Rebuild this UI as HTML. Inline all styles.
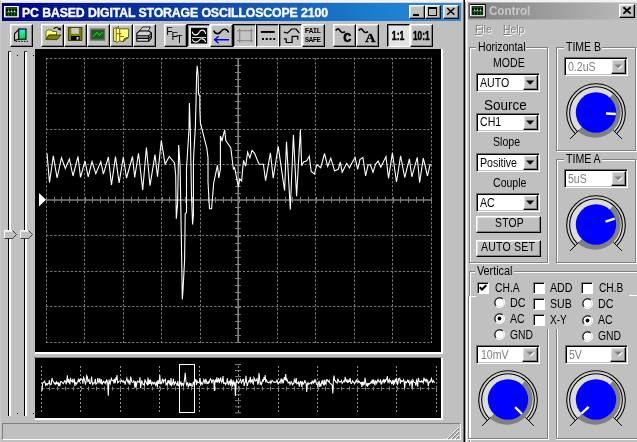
<!DOCTYPE html><html><head><meta charset="utf-8"><title>PC BASED DIGITAL STORAGE OSCILLOSCOPE 2100</title><style>
*{box-sizing:border-box;margin:0;padding:0}
html,body{width:637px;height:442px;overflow:hidden;background:#c0c0c0}
body{position:relative;will-change:transform;font-family:"Liberation Sans",sans-serif;font-size:11px;color:#000}
.a{position:absolute}
.t{position:absolute;white-space:nowrap;line-height:1}
.btn{position:absolute;background:#c0c0c0;border:1px solid;border-color:#fff #000 #000 #fff;box-shadow:inset -1px -1px 0 #808080, inset 1px 1px 0 #dfdfdf}
.btnp{position:absolute;background:#e0e0e0;border:1px solid;border-color:#000 #fff #fff #000;box-shadow:inset 1px 1px 0 #808080}
.sunk{position:absolute;border:1px solid;border-color:#808080 #fff #fff #808080;box-shadow:inset 1px 1px 0 #000}
.combo{position:absolute;background:#fff;border:1px solid;border-color:#686868 #fff #fff #686868;box-shadow:inset 1px 1px 0 #000, inset -1px -1px 0 #c0c0c0}
.grp{position:absolute;border:1px solid #808080;box-shadow:1px 1px 0 #fff, inset 1px 1px 0 #fff}
.lbl{position:absolute;background:#c0c0c0;white-space:nowrap;line-height:1;padding:0 1px}
.dis{color:#808080;text-shadow:1px 1px 0 #fff}
.chk{position:absolute;width:12px;height:12px;background:#fff;border:1px solid;border-color:#808080 #fff #fff #808080;box-shadow:inset 1px 1px 0 #000}
.rad{position:absolute;width:12px;height:12px;border-radius:50%;background:#fff;border:1px solid;border-color:#808080 #fff #fff #808080;box-shadow:inset 1px 1px 0 #404040}
</style></head><body>
<div class="a" style="left:0;top:0;width:463px;height:442px;background:#c0c0c0"></div>
<div class="a" style="left:0;top:0;width:463px;height:2px;background:#f2f2f2"></div>
<div class="a" style="left:0;top:2px;width:463px;height:1px;background:#d6d6da"></div>
<div class="a" style="left:0;top:0;width:1px;height:442px;background:#cacaca"></div>
<div class="a" style="left:463px;top:0;width:3px;height:442px;background:linear-gradient(90deg,#686868 0,#686868 1px,#000 1px,#000 2px,#a0a0a0 2px,#a0a0a0 3px)"></div>
<div class="a" style="left:2px;top:3px;width:459px;height:18px;background:linear-gradient(90deg,#000080 0%,#02108a 8%,#1a7ccc 80%,#2a8cd6 100%)"></div>
<svg class="a" style="left:3px;top:4px" width="18" height="16" viewBox="-1 -2 18 16"><rect x="0.5" y="0.5" width="15" height="12" fill="#101030"/><rect x="0" y="0" width="14.8" height="11.4" fill="#fff"/><rect x="1.6" y="1.2" width="11.6" height="9" fill="#000"/><line x1="4.6" y1="1.4" x2="4.6" y2="10" stroke="#148014" stroke-width="0.8"/><line x1="7.5" y1="1.4" x2="7.5" y2="10" stroke="#148014" stroke-width="0.8"/><line x1="10.6" y1="1.4" x2="10.6" y2="10" stroke="#148014" stroke-width="0.8"/><line x1="1.8" y1="2.5" x2="13" y2="2.5" stroke="#148014" stroke-width="0.6"/><line x1="1.8" y1="6.7" x2="13" y2="6.7" stroke="#148014" stroke-width="0.9"/><line x1="1.8" y1="9.1" x2="13" y2="9.1" stroke="#148014" stroke-width="0.6"/><circle cx="4.6" cy="5.2" r="0.75" fill="#e8ffe8"/><circle cx="7.5" cy="5.2" r="0.75" fill="#e8ffe8"/><circle cx="10.6" cy="5.2" r="0.75" fill="#e8ffe8"/><path d="M3.4 5.9 L4.6 5.2 L6 6 L7.5 5.3 L9 6 L10.6 5.2 L11.8 5.9" fill="none" stroke="#70c870" stroke-width="0.6"/></svg>
<div class="t" id="ttl" style="left:22px;top:6.5px;font-size:12.3px;font-weight:bold;color:#fff;letter-spacing:-0.12px;-webkit-text-stroke:0.35px #fff">PC BASED DIGITAL STORAGE OSCILLOSCOPE 2100</div>
<div class="btn" style="left:409px;top:5px;width:16px;height:14px"></div><div class="a" style="left:413px;top:14px;width:6px;height:2px;background:#000"></div>
<div class="btn" style="left:425px;top:5px;width:16px;height:14px"></div><div class="a" style="left:428px;top:7px;width:9px;height:9px;border:1px solid #000;border-top:2px solid #000"></div>
<div class="btn" style="left:443px;top:5px;width:16px;height:14px"></div><svg class="a" style="left:443px;top:5px" width="16" height="14"><path d="M4.2 3 L11.4 9.8 M11.4 3 L4.2 9.8" stroke="#000" stroke-width="1.55" fill="none"/></svg>
<div class="btn" style="left:10px;top:24px;width:23px;height:23px"></div>
<div class="btn" style="left:41px;top:24px;width:23px;height:23px"></div>
<div class="btn" style="left:64px;top:24px;width:23px;height:23px"></div>
<div class="btn" style="left:87px;top:24px;width:23px;height:23px"></div>
<div class="btn" style="left:110px;top:24px;width:23px;height:23px"></div>
<div class="btn" style="left:133px;top:24px;width:23px;height:23px"></div>
<div class="btn" style="left:164px;top:24px;width:23px;height:23px"></div>
<div class="btnp" style="left:187px;top:24px;width:23px;height:22.5px;background:#e4e4e4"></div>
<div class="btn" style="left:210px;top:24px;width:23px;height:23px"></div>
<div class="btnp" style="left:233px;top:24px;width:23px;height:22.5px;background:#c4c4c4"></div>
<div class="btnp" style="left:256px;top:24px;width:23px;height:22.5px;background:#c4c4c4"></div>
<div class="btnp" style="left:279px;top:24px;width:23px;height:22.5px;background:#c4c4c4"></div>
<div class="btn" style="left:302px;top:24px;width:23px;height:23px"></div>
<div class="btn" style="left:333px;top:24px;width:23px;height:23px"></div>
<div class="btn" style="left:356px;top:24px;width:23px;height:23px"></div>
<div class="btnp" style="left:387px;top:24px;width:23px;height:22.5px;background:#e4e4e4"></div>
<div class="btn" style="left:409.5px;top:24px;width:23px;height:23px"></div>
<svg class="a" style="left:0;top:22px" width="463" height="28" viewBox="0 22 463 28"><defs><linearGradient id="cg" x1="0" y1="0" x2="0.3" y2="1"><stop offset="0" stop-color="#30e0ff"/><stop offset="0.4" stop-color="#28e8c8"/><stop offset="1" stop-color="#10d830"/></linearGradient></defs><polygon points="18.8,29.3 14.5,33.8 14.5,40.6 18.8,39.2" fill="#c8c8c8" stroke="#000" stroke-width="1.1"/><rect x="18.8" y="29" width="7.2" height="10.2" fill="url(#cg)" stroke="#000" stroke-width="1.1"/><line x1="15.5" y1="41.3" x2="28" y2="41.3" stroke="#000" stroke-width="1" stroke-dasharray="1.6 1.2"/><polygon points="46,31.2 48,30 51.5,30 52.5,31.5 56.5,31.5 56.5,35 48.5,35 46,39.3" fill="#ffff80" stroke="#505000" stroke-width="0.8"/><polygon points="46.2,39.6 49,35 61,35 57.2,39.6" fill="#808000" stroke="#303000" stroke-width="0.8"/><path d="M53.6 29 Q56.6 25.3 59.4 29.4" fill="none" stroke="#000" stroke-width="1.1"/><polygon points="57.6,29.6 61,30.4 60.6,27.2" fill="#000"/><rect x="68.3" y="27.6" width="13.6" height="12.8" fill="#808000" stroke="#303000" stroke-width="0.9"/><rect x="71.3" y="28" width="7.6" height="5.8" fill="#c8c8c8"/><rect x="71" y="36" width="8.6" height="4.2" fill="#000"/><rect x="76.6" y="37" width="1.8" height="2.6" fill="#e0e0e0"/><rect x="90.2" y="28.6" width="15" height="11.9" fill="#4c4c4c"/><rect x="90.8" y="29.2" width="13.8" height="10.7" fill="none" stroke="#7a7a7a" stroke-width="0.7"/><rect x="92" y="30.6" width="11.4" height="7.9" fill="#0c640c"/><path d="M92.6 36.4 C94 36.6 95 34.5 96.2 33 C97.2 32 98 33 98.8 34.8 C99.6 36.2 100.6 34.2 101.4 33 L102.8 32.6" fill="none" stroke="#58d058" stroke-width="1"/><polygon points="113.6,28.6 116.2,27.8 119.6,28.8 128.8,28.8 128.4,37.6 124.6,38.4 123.2,41.6 119.6,41 117.6,42.2 113.6,41.2" fill="#ffff80" stroke="#505000" stroke-width="0.9"/><path d="M116.2 27.8 V41.6 M119.7 28.8 V41 M116.2 33.6 H121.4 M119.7 36.4 H124" stroke="#606000" stroke-width="0.9" fill="none"/><path d="M124.6 38.4 L123.2 41.6 L128.4 37.6 Z" fill="#a0a040" stroke="#404000" stroke-width="0.7"/><path d="M117.6 27.2 L118.8 26.6" stroke="#000" stroke-width="1"/><polygon points="139.6,31 142.8,27 150.2,27 148.2,31" fill="#fff" stroke="#000" stroke-width="0.9"/><polygon points="136.8,33.4 139.4,31 148.6,31 151.4,32.8 151.4,38 148.6,41.2 136.8,41.2" fill="#d4d4d4" stroke="#000" stroke-width="1.1"/><path d="M136.8 35.8 H148.6 L151.4 33.4 M136.8 38.4 H148.6 L151.4 35.8 M148.6 35.8 V41.2" stroke="#000" stroke-width="1.1" fill="none"/><path d="M137.4 37.1 H148.2" stroke="#606060" stroke-width="1.2"/><path d="M142.6 28.6 H148 M141.8 29.8 H147" stroke="#909090" stroke-width="0.6"/><text x="166.3" y="34.6" font-size="10.5" font-family="Liberation Sans, sans-serif" fill="#000">F</text><text x="171.6" y="39.8" font-size="10.5" font-family="Liberation Sans, sans-serif" fill="#000">F</text><text x="176.2" y="42.6" font-size="10.5" font-family="Liberation Sans, sans-serif" fill="#000">T</text><rect x="191" y="27.8" width="16.2" height="15.8" fill="#000"/><path d="M192 37.6 H206.2" stroke="#fff" stroke-width="0.9"/><path d="M192.2 31.6 C193 35.6 197 35.9 199 32.6 C200.6 29.4 204.6 28.8 205.7 34" fill="none" stroke="#fff" stroke-width="1.1"/><path d="M192.2 39.4 C193.4 42.8 197 42.8 199 40.3 C200.6 38.2 204.2 38 205.7 42" fill="none" stroke="#fff" stroke-width="1.1"/><path d="M213.8 30.5 C215 34.5 219 34.5 221 31.5 C222.5 28.6 227 28 228.6 32.6" fill="none" stroke="#000" stroke-width="1.6"/><path d="M214.5 39.7 H229 M218.6 36.2 L214.6 39.7 L218.6 43.2" fill="none" stroke="#0000f0" stroke-width="1.4"/><path d="M239.7 28.2 V42.6 M251.2 28.2 V42.6 M237 30.7 H253.2 M237 40.7 H253.2" stroke="#808080" stroke-width="1.1" fill="none"/><rect x="260.9" y="31" width="13.8" height="1.9" fill="#000"/><path d="M262 39.1 H275.2" stroke="#000" stroke-width="2" stroke-dasharray="2 1.75"/><path d="M283.8 32.2 L287.4 33.2 L291.6 29 L296 29 L299.3 33" fill="none" stroke="#000" stroke-width="1.2"/><path d="M283.8 38.8 H286.2 V42.5 H292.1 V36.4 H297.8 V39.8" fill="none" stroke="#000" stroke-width="1.2"/><text x="304.8" y="33.1" font-size="7.4" font-weight="bold" font-family="Liberation Mono, monospace" fill="#000" textLength="16.2" lengthAdjust="spacing">FAIL</text><text x="304.8" y="41.7" font-size="7.4" font-weight="bold" font-family="Liberation Mono, monospace" fill="#000" textLength="16.2" lengthAdjust="spacing">SAFE</text><path d="M335.8 30.6 C336.8 28.4 338.6 28.4 339.8 30.4 C341 32.6 343 33.2 345 31.6" fill="none" stroke="#000" stroke-width="1.6"/><text x="343.2" y="42.3" font-size="13.6" font-weight="bold" font-family="Liberation Mono, monospace" fill="#000" stroke="#000" stroke-width="0.5">C</text><path d="M358.8 30.6 C359.8 28.4 361.6 28.4 362.8 30.4 C364 32.6 366 33.2 368 31.6" fill="none" stroke="#000" stroke-width="1.6"/><text x="365.2" y="42.2" font-size="13.4" font-weight="bold" font-family="Liberation Serif, serif" fill="#000" stroke="#000" stroke-width="0.4" textLength="10.2" lengthAdjust="spacingAndGlyphs">A</text><text x="391.8" y="40.3" font-size="12.3" font-weight="bold" font-family="Liberation Sans, sans-serif" fill="#000" stroke="#000" stroke-width="0.45" textLength="12.6" lengthAdjust="spacingAndGlyphs">1:1</text><text x="413" y="40.3" font-size="12.3" font-weight="bold" font-family="Liberation Sans, sans-serif" fill="#000" stroke="#000" stroke-width="0.45" textLength="16.6" lengthAdjust="spacingAndGlyphs">10:1</text></svg>
<div class="a" style="left:8px;top:52px;width:1px;height:364px;background:#000"></div><div class="a" style="left:8px;top:51px;width:3px;height:1px;background:#404040"></div>
<div class="a" style="left:9px;top:52px;width:2px;height:364px;background:#fff"></div>
<svg class="a" style="left:4px;top:230px" width="14" height="9" viewBox="0 0 14 9"><path d="M0.5 0.5 H8.5 L12.5 4.5 L8.5 8.5 H0.5 Z" fill="#c0c0c0" stroke="none"/><path d="M0.5 8 V0.5 H8.5" stroke="#fff" fill="none"/><path d="M8.5 0.5 L12.5 4.5 L8.5 8.5 H0.5" stroke="#404040" fill="none"/><path d="M1.5 1.5 H8 " stroke="#e8e8e8" fill="none"/></svg>
<div class="a" style="left:24px;top:52px;width:1px;height:364px;background:#000"></div><div class="a" style="left:24px;top:51px;width:3px;height:1px;background:#404040"></div>
<div class="a" style="left:25px;top:52px;width:2px;height:364px;background:#fff"></div>
<svg class="a" style="left:20px;top:230px" width="14" height="9" viewBox="0 0 14 9"><path d="M0.5 0.5 H8.5 L12.5 4.5 L8.5 8.5 H0.5 Z" fill="#c0c0c0" stroke="none"/><path d="M0.5 8 V0.5 H8.5" stroke="#fff" fill="none"/><path d="M8.5 0.5 L12.5 4.5 L8.5 8.5 H0.5" stroke="#404040" fill="none"/><path d="M1.5 1.5 H8 " stroke="#e8e8e8" fill="none"/></svg>
<div class="a" style="left:17px;top:55px;width:1px;height:1px;background:#000"></div>
<div class="a" style="left:33px;top:55px;width:1px;height:1px;background:#000"></div>
<div class="a" style="left:17px;top:413px;width:1px;height:1px;background:#000"></div>
<div class="a" style="left:33px;top:413px;width:1px;height:1px;background:#000"></div>
<div class="a" style="left:35px;top:49px;width:408px;height:305px;background:#fff"></div>
<svg class="a" style="left:35px;top:49px" width="406" height="303" viewBox="35 49 406 303"><rect x="35" y="49" width="406" height="303" fill="#000"/><line x1="46.5" y1="58.0" x2="46.5" y2="343.0" stroke="#858585" stroke-width="0.9" stroke-dasharray="2.4 1.7"/><line x1="84.5" y1="58.0" x2="84.5" y2="343.0" stroke="#858585" stroke-width="0.9" stroke-dasharray="2.4 1.7"/><line x1="123.5" y1="58.0" x2="123.5" y2="343.0" stroke="#858585" stroke-width="0.9" stroke-dasharray="2.4 1.7"/><line x1="161.5" y1="58.0" x2="161.5" y2="343.0" stroke="#858585" stroke-width="0.9" stroke-dasharray="2.4 1.7"/><line x1="200.5" y1="58.0" x2="200.5" y2="343.0" stroke="#858585" stroke-width="0.9" stroke-dasharray="2.4 1.7"/><line x1="277.5" y1="58.0" x2="277.5" y2="343.0" stroke="#858585" stroke-width="0.9" stroke-dasharray="2.4 1.7"/><line x1="315.5" y1="58.0" x2="315.5" y2="343.0" stroke="#858585" stroke-width="0.9" stroke-dasharray="2.4 1.7"/><line x1="354.5" y1="58.0" x2="354.5" y2="343.0" stroke="#858585" stroke-width="0.9" stroke-dasharray="2.4 1.7"/><line x1="392.5" y1="58.0" x2="392.5" y2="343.0" stroke="#858585" stroke-width="0.9" stroke-dasharray="2.4 1.7"/><line x1="431.5" y1="58.0" x2="431.5" y2="343.0" stroke="#858585" stroke-width="0.9" stroke-dasharray="2.4 1.7"/><line x1="46.0" y1="58.5" x2="432.0" y2="58.5" stroke="#858585" stroke-width="0.9" stroke-dasharray="2.4 1.7"/><line x1="46.0" y1="93.5" x2="432.0" y2="93.5" stroke="#858585" stroke-width="0.9" stroke-dasharray="2.4 1.7"/><line x1="46.0" y1="129.5" x2="432.0" y2="129.5" stroke="#858585" stroke-width="0.9" stroke-dasharray="2.4 1.7"/><line x1="46.0" y1="164.5" x2="432.0" y2="164.5" stroke="#858585" stroke-width="0.9" stroke-dasharray="2.4 1.7"/><line x1="46.0" y1="235.5" x2="432.0" y2="235.5" stroke="#858585" stroke-width="0.9" stroke-dasharray="2.4 1.7"/><line x1="46.0" y1="271.5" x2="432.0" y2="271.5" stroke="#858585" stroke-width="0.9" stroke-dasharray="2.4 1.7"/><line x1="46.0" y1="306.5" x2="432.0" y2="306.5" stroke="#858585" stroke-width="0.9" stroke-dasharray="2.4 1.7"/><line x1="46.0" y1="342.5" x2="432.0" y2="342.5" stroke="#858585" stroke-width="0.9" stroke-dasharray="2.4 1.7"/><line x1="46.5" y1="200.0" x2="431.5" y2="200.0" stroke="#808080" stroke-width="1.7"/><line x1="238.2" y1="58.5" x2="238.2" y2="342.5" stroke="#808080" stroke-width="1.7"/><line x1="46.5" y1="196.9" x2="46.5" y2="202.8" stroke="#808080" stroke-width="1"/><line x1="54.5" y1="196.9" x2="54.5" y2="202.8" stroke="#808080" stroke-width="1"/><line x1="61.5" y1="196.9" x2="61.5" y2="202.8" stroke="#808080" stroke-width="1"/><line x1="69.5" y1="196.9" x2="69.5" y2="202.8" stroke="#808080" stroke-width="1"/><line x1="77.5" y1="196.9" x2="77.5" y2="202.8" stroke="#808080" stroke-width="1"/><line x1="85.5" y1="196.9" x2="85.5" y2="202.8" stroke="#808080" stroke-width="1"/><line x1="92.5" y1="196.9" x2="92.5" y2="202.8" stroke="#808080" stroke-width="1"/><line x1="100.5" y1="196.9" x2="100.5" y2="202.8" stroke="#808080" stroke-width="1"/><line x1="108.5" y1="196.9" x2="108.5" y2="202.8" stroke="#808080" stroke-width="1"/><line x1="115.5" y1="196.9" x2="115.5" y2="202.8" stroke="#808080" stroke-width="1"/><line x1="123.5" y1="196.9" x2="123.5" y2="202.8" stroke="#808080" stroke-width="1"/><line x1="131.5" y1="196.9" x2="131.5" y2="202.8" stroke="#808080" stroke-width="1"/><line x1="138.5" y1="196.9" x2="138.5" y2="202.8" stroke="#808080" stroke-width="1"/><line x1="146.5" y1="196.9" x2="146.5" y2="202.8" stroke="#808080" stroke-width="1"/><line x1="154.5" y1="196.9" x2="154.5" y2="202.8" stroke="#808080" stroke-width="1"/><line x1="162.5" y1="196.9" x2="162.5" y2="202.8" stroke="#808080" stroke-width="1"/><line x1="169.5" y1="196.9" x2="169.5" y2="202.8" stroke="#808080" stroke-width="1"/><line x1="177.5" y1="196.9" x2="177.5" y2="202.8" stroke="#808080" stroke-width="1"/><line x1="185.5" y1="196.9" x2="185.5" y2="202.8" stroke="#808080" stroke-width="1"/><line x1="192.5" y1="196.9" x2="192.5" y2="202.8" stroke="#808080" stroke-width="1"/><line x1="200.5" y1="196.9" x2="200.5" y2="202.8" stroke="#808080" stroke-width="1"/><line x1="208.5" y1="196.9" x2="208.5" y2="202.8" stroke="#808080" stroke-width="1"/><line x1="215.5" y1="196.9" x2="215.5" y2="202.8" stroke="#808080" stroke-width="1"/><line x1="223.5" y1="196.9" x2="223.5" y2="202.8" stroke="#808080" stroke-width="1"/><line x1="231.5" y1="196.9" x2="231.5" y2="202.8" stroke="#808080" stroke-width="1"/><line x1="239.5" y1="196.9" x2="239.5" y2="202.8" stroke="#808080" stroke-width="1"/><line x1="246.5" y1="196.9" x2="246.5" y2="202.8" stroke="#808080" stroke-width="1"/><line x1="254.5" y1="196.9" x2="254.5" y2="202.8" stroke="#808080" stroke-width="1"/><line x1="262.5" y1="196.9" x2="262.5" y2="202.8" stroke="#808080" stroke-width="1"/><line x1="269.5" y1="196.9" x2="269.5" y2="202.8" stroke="#808080" stroke-width="1"/><line x1="277.5" y1="196.9" x2="277.5" y2="202.8" stroke="#808080" stroke-width="1"/><line x1="285.5" y1="196.9" x2="285.5" y2="202.8" stroke="#808080" stroke-width="1"/><line x1="292.5" y1="196.9" x2="292.5" y2="202.8" stroke="#808080" stroke-width="1"/><line x1="300.5" y1="196.9" x2="300.5" y2="202.8" stroke="#808080" stroke-width="1"/><line x1="308.5" y1="196.9" x2="308.5" y2="202.8" stroke="#808080" stroke-width="1"/><line x1="316.5" y1="196.9" x2="316.5" y2="202.8" stroke="#808080" stroke-width="1"/><line x1="323.5" y1="196.9" x2="323.5" y2="202.8" stroke="#808080" stroke-width="1"/><line x1="331.5" y1="196.9" x2="331.5" y2="202.8" stroke="#808080" stroke-width="1"/><line x1="339.5" y1="196.9" x2="339.5" y2="202.8" stroke="#808080" stroke-width="1"/><line x1="346.5" y1="196.9" x2="346.5" y2="202.8" stroke="#808080" stroke-width="1"/><line x1="354.5" y1="196.9" x2="354.5" y2="202.8" stroke="#808080" stroke-width="1"/><line x1="362.5" y1="196.9" x2="362.5" y2="202.8" stroke="#808080" stroke-width="1"/><line x1="369.5" y1="196.9" x2="369.5" y2="202.8" stroke="#808080" stroke-width="1"/><line x1="377.5" y1="196.9" x2="377.5" y2="202.8" stroke="#808080" stroke-width="1"/><line x1="385.5" y1="196.9" x2="385.5" y2="202.8" stroke="#808080" stroke-width="1"/><line x1="393.5" y1="196.9" x2="393.5" y2="202.8" stroke="#808080" stroke-width="1"/><line x1="400.5" y1="196.9" x2="400.5" y2="202.8" stroke="#808080" stroke-width="1"/><line x1="408.5" y1="196.9" x2="408.5" y2="202.8" stroke="#808080" stroke-width="1"/><line x1="416.5" y1="196.9" x2="416.5" y2="202.8" stroke="#808080" stroke-width="1"/><line x1="423.5" y1="196.9" x2="423.5" y2="202.8" stroke="#808080" stroke-width="1"/><line x1="431.5" y1="196.9" x2="431.5" y2="202.8" stroke="#808080" stroke-width="1"/><line x1="235.0" y1="58.5" x2="240.79999999999998" y2="58.5" stroke="#808080" stroke-width="1"/><line x1="235.0" y1="65.5" x2="240.79999999999998" y2="65.5" stroke="#808080" stroke-width="1"/><line x1="235.0" y1="72.5" x2="240.79999999999998" y2="72.5" stroke="#808080" stroke-width="1"/><line x1="235.0" y1="79.5" x2="240.79999999999998" y2="79.5" stroke="#808080" stroke-width="1"/><line x1="235.0" y1="86.5" x2="240.79999999999998" y2="86.5" stroke="#808080" stroke-width="1"/><line x1="235.0" y1="94.5" x2="240.79999999999998" y2="94.5" stroke="#808080" stroke-width="1"/><line x1="235.0" y1="101.5" x2="240.79999999999998" y2="101.5" stroke="#808080" stroke-width="1"/><line x1="235.0" y1="108.5" x2="240.79999999999998" y2="108.5" stroke="#808080" stroke-width="1"/><line x1="235.0" y1="115.5" x2="240.79999999999998" y2="115.5" stroke="#808080" stroke-width="1"/><line x1="235.0" y1="122.5" x2="240.79999999999998" y2="122.5" stroke="#808080" stroke-width="1"/><line x1="235.0" y1="129.5" x2="240.79999999999998" y2="129.5" stroke="#808080" stroke-width="1"/><line x1="235.0" y1="136.5" x2="240.79999999999998" y2="136.5" stroke="#808080" stroke-width="1"/><line x1="235.0" y1="143.5" x2="240.79999999999998" y2="143.5" stroke="#808080" stroke-width="1"/><line x1="235.0" y1="150.5" x2="240.79999999999998" y2="150.5" stroke="#808080" stroke-width="1"/><line x1="235.0" y1="157.5" x2="240.79999999999998" y2="157.5" stroke="#808080" stroke-width="1"/><line x1="235.0" y1="165.5" x2="240.79999999999998" y2="165.5" stroke="#808080" stroke-width="1"/><line x1="235.0" y1="172.5" x2="240.79999999999998" y2="172.5" stroke="#808080" stroke-width="1"/><line x1="235.0" y1="179.5" x2="240.79999999999998" y2="179.5" stroke="#808080" stroke-width="1"/><line x1="235.0" y1="186.5" x2="240.79999999999998" y2="186.5" stroke="#808080" stroke-width="1"/><line x1="235.0" y1="193.5" x2="240.79999999999998" y2="193.5" stroke="#808080" stroke-width="1"/><line x1="235.0" y1="200.5" x2="240.79999999999998" y2="200.5" stroke="#808080" stroke-width="1"/><line x1="235.0" y1="207.5" x2="240.79999999999998" y2="207.5" stroke="#808080" stroke-width="1"/><line x1="235.0" y1="214.5" x2="240.79999999999998" y2="214.5" stroke="#808080" stroke-width="1"/><line x1="235.0" y1="221.5" x2="240.79999999999998" y2="221.5" stroke="#808080" stroke-width="1"/><line x1="235.0" y1="228.5" x2="240.79999999999998" y2="228.5" stroke="#808080" stroke-width="1"/><line x1="235.0" y1="236.5" x2="240.79999999999998" y2="236.5" stroke="#808080" stroke-width="1"/><line x1="235.0" y1="243.5" x2="240.79999999999998" y2="243.5" stroke="#808080" stroke-width="1"/><line x1="235.0" y1="250.5" x2="240.79999999999998" y2="250.5" stroke="#808080" stroke-width="1"/><line x1="235.0" y1="257.5" x2="240.79999999999998" y2="257.5" stroke="#808080" stroke-width="1"/><line x1="235.0" y1="264.5" x2="240.79999999999998" y2="264.5" stroke="#808080" stroke-width="1"/><line x1="235.0" y1="271.5" x2="240.79999999999998" y2="271.5" stroke="#808080" stroke-width="1"/><line x1="235.0" y1="278.5" x2="240.79999999999998" y2="278.5" stroke="#808080" stroke-width="1"/><line x1="235.0" y1="285.5" x2="240.79999999999998" y2="285.5" stroke="#808080" stroke-width="1"/><line x1="235.0" y1="292.5" x2="240.79999999999998" y2="292.5" stroke="#808080" stroke-width="1"/><line x1="235.0" y1="299.5" x2="240.79999999999998" y2="299.5" stroke="#808080" stroke-width="1"/><line x1="235.0" y1="307.5" x2="240.79999999999998" y2="307.5" stroke="#808080" stroke-width="1"/><line x1="235.0" y1="314.5" x2="240.79999999999998" y2="314.5" stroke="#808080" stroke-width="1"/><line x1="235.0" y1="321.5" x2="240.79999999999998" y2="321.5" stroke="#808080" stroke-width="1"/><line x1="235.0" y1="328.5" x2="240.79999999999998" y2="328.5" stroke="#808080" stroke-width="1"/><line x1="235.0" y1="335.5" x2="240.79999999999998" y2="335.5" stroke="#808080" stroke-width="1"/><line x1="235.0" y1="342.5" x2="240.79999999999998" y2="342.5" stroke="#808080" stroke-width="1"/><polygon points="39,193 46,199.7 39,206.5" fill="#fff"/><polyline fill="none" stroke="#fff" stroke-width="1.1" stroke-linejoin="miter" points="47.0,153.3 49.5,182.5 53.3,155.8 57.1,178 61.5,157.7 65.3,168.5 69.4,159 73,176 78,156.5 80.5,177.4 85,161 88.2,176.8 92,161.5 95.8,173.6 100.8,161.5 103.4,174.2 108.4,157 111.5,185 115.5,156.5 119.1,183 123.3,157 126.5,178 132.5,156.5 134.7,177.4 138.5,153.3 142.7,190 146.4,147.6 150,185.6 155,154.6 157.5,176.8 161.3,140.6 165.1,164 169.3,156.5 174.5,163 175.7,175.3 176.3,218.8 177.6,203.6 178.7,145 180.1,166.5 181.7,260 182.3,299.4 183,290 184.6,260 185.2,213.7 186.5,212.5 186.5,169 187.7,150 189,129 189.4,103 190.3,129 191.5,196 192.6,224.5 193.4,215 193.4,162.7 194,150 195.3,128.5 196,103 196.6,75 197.2,65.7 198.1,75.8 198.5,94 199.8,96 199.8,108 200.4,122.8 206.8,148 208,157.6 208,181.7 209.5,208.7 211.6,208.7 213.7,183 217.5,165.2 218.8,177.9 220.4,169 220.4,136 222,140.5 224.7,129.8 225.8,140.5 230.8,148 233.4,169 234.6,167.7 238.4,186.8 239.7,179 241.6,181 243.5,160.4 245.7,166.1 247.6,152.2 249.9,157.9 252,150.3 254.6,153.4 259,164.2 263.4,164.2 265.6,180.7 270.4,152.8 273.2,178.2 278.2,146.3 284.6,190.6 286.5,141.8 290.3,209.6 293.4,134.9 296.6,196.3 300.4,129.4 301.7,165.8 303.6,162 306.8,160.8 309.3,156.3 311.2,171.5 314.4,174 316.9,164.6 320.7,167.7 324.5,153.5 327.7,166.5 330.8,158.2 334.6,170.9 338.4,169 340.3,162 342.2,172.2 346.7,163.3 349.5,167.8 351.7,163.3 355.1,157.4 357.7,169.3 359.9,159.6 362.9,157.4 365.6,176 368.1,164.8 370.4,164.8 373,172.3 375.6,164.1 378.1,161.1 380.8,167.1 386,156.6 388.5,178.3 392.4,152.9 396.5,182 400.6,155.9 404.7,177.5 409.4,158.9 411.8,176.8 417.3,157.4 419.6,182.7 423.3,158.1 427.5,176 430,164.8 431.5,164.8"/></svg>
<div class="a" style="left:35px;top:358px;width:408px;height:62px;background:#fff"></div>
<div class="a" style="left:34px;top:357px;width:407px;height:1px;background:#808080"></div>
<svg class="a" style="left:35px;top:358px" width="406" height="60" viewBox="35 358 406 60"><rect x="35" y="358" width="406" height="60" fill="#000"/><line x1="41.5" y1="366" x2="41.5" y2="412" stroke="#909090" stroke-width="1" stroke-dasharray="2 2"/><line x1="80.5" y1="366" x2="80.5" y2="412" stroke="#909090" stroke-width="1" stroke-dasharray="2 2"/><line x1="120.5" y1="366" x2="120.5" y2="412" stroke="#909090" stroke-width="1" stroke-dasharray="2 2"/><line x1="159.5" y1="366" x2="159.5" y2="412" stroke="#909090" stroke-width="1" stroke-dasharray="2 2"/><line x1="199.5" y1="366" x2="199.5" y2="412" stroke="#909090" stroke-width="1" stroke-dasharray="2 2"/><line x1="238.5" y1="366" x2="238.5" y2="412" stroke="#909090" stroke-width="1" stroke-dasharray="2 2"/><line x1="278.5" y1="366" x2="278.5" y2="412" stroke="#909090" stroke-width="1" stroke-dasharray="2 2"/><line x1="317.5" y1="366" x2="317.5" y2="412" stroke="#909090" stroke-width="1" stroke-dasharray="2 2"/><line x1="357.5" y1="366" x2="357.5" y2="412" stroke="#909090" stroke-width="1" stroke-dasharray="2 2"/><line x1="396.5" y1="366" x2="396.5" y2="412" stroke="#909090" stroke-width="1" stroke-dasharray="2 2"/><line x1="436.5" y1="366" x2="436.5" y2="412" stroke="#909090" stroke-width="1" stroke-dasharray="2 2"/><line x1="41.5" y1="388.5" x2="436.5" y2="388.5" stroke="#808080" stroke-width="1" stroke-dasharray="3 2"/><line x1="41.5" y1="386.5" x2="41.5" y2="390.5" stroke="#808080" stroke-width="1"/><line x1="49.5" y1="386.5" x2="49.5" y2="390.5" stroke="#808080" stroke-width="1"/><line x1="57.5" y1="386.5" x2="57.5" y2="390.5" stroke="#808080" stroke-width="1"/><line x1="65.5" y1="386.5" x2="65.5" y2="390.5" stroke="#808080" stroke-width="1"/><line x1="73.5" y1="386.5" x2="73.5" y2="390.5" stroke="#808080" stroke-width="1"/><line x1="81.5" y1="386.5" x2="81.5" y2="390.5" stroke="#808080" stroke-width="1"/><line x1="88.5" y1="386.5" x2="88.5" y2="390.5" stroke="#808080" stroke-width="1"/><line x1="96.5" y1="386.5" x2="96.5" y2="390.5" stroke="#808080" stroke-width="1"/><line x1="104.5" y1="386.5" x2="104.5" y2="390.5" stroke="#808080" stroke-width="1"/><line x1="112.5" y1="386.5" x2="112.5" y2="390.5" stroke="#808080" stroke-width="1"/><line x1="120.5" y1="386.5" x2="120.5" y2="390.5" stroke="#808080" stroke-width="1"/><line x1="128.5" y1="386.5" x2="128.5" y2="390.5" stroke="#808080" stroke-width="1"/><line x1="136.5" y1="386.5" x2="136.5" y2="390.5" stroke="#808080" stroke-width="1"/><line x1="144.5" y1="386.5" x2="144.5" y2="390.5" stroke="#808080" stroke-width="1"/><line x1="152.5" y1="386.5" x2="152.5" y2="390.5" stroke="#808080" stroke-width="1"/><line x1="160.5" y1="386.5" x2="160.5" y2="390.5" stroke="#808080" stroke-width="1"/><line x1="167.5" y1="386.5" x2="167.5" y2="390.5" stroke="#808080" stroke-width="1"/><line x1="175.5" y1="386.5" x2="175.5" y2="390.5" stroke="#808080" stroke-width="1"/><line x1="183.5" y1="386.5" x2="183.5" y2="390.5" stroke="#808080" stroke-width="1"/><line x1="191.5" y1="386.5" x2="191.5" y2="390.5" stroke="#808080" stroke-width="1"/><line x1="199.5" y1="386.5" x2="199.5" y2="390.5" stroke="#808080" stroke-width="1"/><line x1="207.5" y1="386.5" x2="207.5" y2="390.5" stroke="#808080" stroke-width="1"/><line x1="215.5" y1="386.5" x2="215.5" y2="390.5" stroke="#808080" stroke-width="1"/><line x1="223.5" y1="386.5" x2="223.5" y2="390.5" stroke="#808080" stroke-width="1"/><line x1="231.5" y1="386.5" x2="231.5" y2="390.5" stroke="#808080" stroke-width="1"/><line x1="239.5" y1="386.5" x2="239.5" y2="390.5" stroke="#808080" stroke-width="1"/><line x1="246.5" y1="386.5" x2="246.5" y2="390.5" stroke="#808080" stroke-width="1"/><line x1="254.5" y1="386.5" x2="254.5" y2="390.5" stroke="#808080" stroke-width="1"/><line x1="262.5" y1="386.5" x2="262.5" y2="390.5" stroke="#808080" stroke-width="1"/><line x1="270.5" y1="386.5" x2="270.5" y2="390.5" stroke="#808080" stroke-width="1"/><line x1="278.5" y1="386.5" x2="278.5" y2="390.5" stroke="#808080" stroke-width="1"/><line x1="286.5" y1="386.5" x2="286.5" y2="390.5" stroke="#808080" stroke-width="1"/><line x1="294.5" y1="386.5" x2="294.5" y2="390.5" stroke="#808080" stroke-width="1"/><line x1="302.5" y1="386.5" x2="302.5" y2="390.5" stroke="#808080" stroke-width="1"/><line x1="310.5" y1="386.5" x2="310.5" y2="390.5" stroke="#808080" stroke-width="1"/><line x1="318.5" y1="386.5" x2="318.5" y2="390.5" stroke="#808080" stroke-width="1"/><line x1="325.5" y1="386.5" x2="325.5" y2="390.5" stroke="#808080" stroke-width="1"/><line x1="333.5" y1="386.5" x2="333.5" y2="390.5" stroke="#808080" stroke-width="1"/><line x1="341.5" y1="386.5" x2="341.5" y2="390.5" stroke="#808080" stroke-width="1"/><line x1="349.5" y1="386.5" x2="349.5" y2="390.5" stroke="#808080" stroke-width="1"/><line x1="357.5" y1="386.5" x2="357.5" y2="390.5" stroke="#808080" stroke-width="1"/><line x1="365.5" y1="386.5" x2="365.5" y2="390.5" stroke="#808080" stroke-width="1"/><line x1="373.5" y1="386.5" x2="373.5" y2="390.5" stroke="#808080" stroke-width="1"/><line x1="381.5" y1="386.5" x2="381.5" y2="390.5" stroke="#808080" stroke-width="1"/><line x1="389.5" y1="386.5" x2="389.5" y2="390.5" stroke="#808080" stroke-width="1"/><line x1="397.5" y1="386.5" x2="397.5" y2="390.5" stroke="#808080" stroke-width="1"/><line x1="404.5" y1="386.5" x2="404.5" y2="390.5" stroke="#808080" stroke-width="1"/><line x1="412.5" y1="386.5" x2="412.5" y2="390.5" stroke="#808080" stroke-width="1"/><line x1="420.5" y1="386.5" x2="420.5" y2="390.5" stroke="#808080" stroke-width="1"/><line x1="428.5" y1="386.5" x2="428.5" y2="390.5" stroke="#808080" stroke-width="1"/><line x1="436.5" y1="386.5" x2="436.5" y2="390.5" stroke="#808080" stroke-width="1"/><line x1="235" y1="364.5" x2="241" y2="364.5" stroke="#808080" stroke-width="1"/><line x1="235" y1="370.5" x2="241" y2="370.5" stroke="#808080" stroke-width="1"/><line x1="235" y1="376.6" x2="241" y2="376.6" stroke="#808080" stroke-width="1"/><line x1="235" y1="382.6" x2="241" y2="382.6" stroke="#808080" stroke-width="1"/><line x1="235" y1="388.7" x2="241" y2="388.7" stroke="#808080" stroke-width="1"/><line x1="235" y1="394.7" x2="241" y2="394.7" stroke="#808080" stroke-width="1"/><line x1="235" y1="400.7" x2="241" y2="400.7" stroke="#808080" stroke-width="1"/><line x1="235" y1="406.8" x2="241" y2="406.8" stroke="#808080" stroke-width="1"/><line x1="235" y1="412.8" x2="241" y2="412.8" stroke="#808080" stroke-width="1"/><polyline fill="none" stroke="#fff" stroke-width="1.05" points="42.0,391.0 42.6,383.7 43.2,382.4 43.9,382.2 44.5,381.1 45.1,382.5 45.7,385.1 46.3,383.8 47.0,385.0 47.6,383.6 48.2,383.9 48.8,383.5 49.4,380.0 50.1,384.8 50.7,384.2 51.3,384.2 51.9,378.0 52.5,379.9 53.2,381.6 53.8,382.3 54.4,383.8 55.0,383.1 55.6,384.2 56.3,381.9 56.9,383.7 57.5,383.8 58.1,381.8 58.7,386.3 59.4,384.0 60.0,385.2 60.6,381.7 61.2,381.4 61.8,382.1 62.5,382.5 63.1,383.8 63.7,383.0 64.3,381.6 64.9,380.6 65.6,381.3 66.2,384.5 66.8,380.6 67.4,375.3 68.0,382.8 68.7,379.1 69.3,381.9 69.9,384.3 70.5,377.9 71.1,381.0 71.8,381.4 72.4,380.0 73.0,382.4 73.6,381.3 74.2,378.6 74.9,386.0 75.5,382.6 76.1,383.1 76.7,384.0 77.3,381.9 78.0,381.4 78.6,378.7 79.2,382.3 79.8,380.0 80.4,380.3 81.1,378.8 81.7,379.3 82.3,380.2 82.9,383.7 83.5,377.4 84.2,378.5 84.8,381.7 85.4,384.0 86.0,382.4 86.6,375.6 87.3,376.6 87.9,382.1 88.5,380.1 89.1,379.4 89.7,383.4 90.4,383.7 91.0,381.9 91.6,376.5 92.2,382.5 92.8,384.7 93.5,382.9 94.1,382.7 94.7,382.8 95.3,378.8 95.9,384.2 96.6,383.6 97.2,382.8 97.8,378.0 98.4,380.6 99.0,383.4 99.7,378.3 100.3,381.4 100.9,383.7 101.5,379.2 102.1,384.7 102.8,382.7 103.4,381.3 104.0,382.2 104.6,382.8 105.2,381.7 105.9,383.6 106.5,380.1 107.1,380.6 107.7,383.3 108.3,395.7 109.0,379.5 109.6,382.9 110.2,383.9 110.8,380.2 111.4,378.4 112.1,380.7 112.7,380.6 113.3,380.3 113.9,383.5 114.5,378.8 115.2,383.1 115.8,378.3 116.4,379.2 117.0,375.0 117.6,382.8 118.3,382.3 118.9,381.3 119.5,380.9 120.1,380.9 120.7,381.7 121.4,380.3 122.0,381.2 122.6,381.8 123.2,380.7 123.8,382.2 124.5,381.9 125.1,384.6 125.7,381.5 126.3,380.1 126.9,378.0 127.6,381.0 128.2,382.9 128.8,380.5 129.4,382.0 130.0,384.8 130.7,376.5 131.3,379.3 131.9,382.0 132.5,382.4 133.1,382.1 133.8,380.9 134.4,383.1 135.0,388.0 135.6,381.0 136.2,386.6 136.9,382.8 137.5,381.1 138.1,382.0 138.7,381.8 139.3,382.2 140.0,377.2 140.6,388.0 141.2,384.4 141.8,380.3 142.4,382.4 143.1,384.4 143.7,384.2 144.3,385.4 144.9,379.4 145.5,381.9 146.2,382.0 146.8,383.8 147.4,384.7 148.0,377.5 148.6,384.6 149.3,379.8 149.9,383.8 150.5,379.7 151.1,382.8 151.7,384.7 152.4,382.2 153.0,382.8 153.6,383.9 154.2,382.6 154.8,382.1 155.5,385.2 156.1,384.2 156.7,381.7 157.3,387.4 157.9,380.0 158.6,383.9 159.2,381.6 159.8,375.0 160.4,383.4 161.0,382.5 161.7,383.3 162.3,379.2 162.9,379.2 163.5,383.2 164.1,380.3 164.8,380.1 165.4,379.3 166.0,384.5 166.6,383.6 167.2,385.0 167.9,380.4 168.5,382.3 169.1,380.1 169.7,383.8 170.3,385.4 171.0,378.0 171.6,385.4 172.2,384.4 172.8,382.3 173.4,378.9 174.1,385.4 174.7,382.6 175.3,381.7 175.9,383.6 176.5,383.7 177.2,385.8 177.8,381.1 178.4,385.3 179.0,386.0 179.6,386.0 180.3,382.9 180.9,381.9 181.5,385.3 182.1,383.6 182.7,383.6 183.4,386.1 184.0,382.9 184.6,379.1 185.2,372.7 185.8,379.9 186.5,385.0 187.1,384.1 187.7,382.3 188.3,387.5 188.9,385.0 189.6,383.5 190.2,385.9 190.8,383.2 191.4,385.3 192.0,386.1 192.7,386.2 193.3,381.9 193.9,384.8 194.5,379.5 195.1,380.9 195.8,379.2 196.4,384.9 197.0,380.4 197.6,382.7 198.2,382.3 198.9,382.5 199.5,381.4 200.1,378.0 200.7,385.7 201.3,382.4 202.0,383.2 202.6,384.1 203.2,381.7 203.8,379.6 204.4,380.9 205.1,384.0 205.7,378.8 206.3,380.7 206.9,383.7 207.5,383.3 208.2,381.7 208.8,383.2 209.4,382.0 210.0,379.4 210.6,378.7 211.3,380.4 211.9,383.4 212.5,380.6 213.1,379.9 213.7,380.2 214.4,391.0 215.0,381.5 215.6,379.5 216.2,382.4 216.8,377.3 217.5,382.4 218.1,380.6 218.7,378.1 219.3,383.2 219.9,381.4 220.6,377.7 221.2,380.3 221.8,382.5 222.4,381.1 223.0,376.0 223.7,383.5 224.3,383.3 224.9,382.7 225.5,384.6 226.1,383.4 226.8,383.0 227.4,378.2 228.0,383.8 228.6,384.6 229.2,381.6 229.9,381.2 230.5,385.8 231.1,378.7 231.7,382.9 232.3,386.6 233.0,380.2 233.6,383.3 234.2,385.5 234.8,381.6 235.4,396.0 236.1,383.5 236.7,380.0 237.3,381.5 237.9,382.2 238.5,383.1 239.2,381.4 239.8,381.1 240.4,379.4 241.0,380.6 241.6,382.9 242.3,381.4 242.9,379.5 243.5,379.4 244.1,386.0 244.7,383.1 245.4,382.1 246.0,375.9 246.6,381.9 247.2,386.0 247.8,383.9 248.5,381.4 249.1,380.5 249.7,381.6 250.3,376.9 250.9,382.5 251.6,381.1 252.2,379.2 252.8,383.0 253.4,383.9 254.0,377.8 254.7,379.3 255.3,381.1 255.9,380.9 256.5,379.8 257.1,378.8 257.8,384.7 258.4,382.7 259.0,373.0 259.6,378.2 260.2,384.1 260.9,382.8 261.5,384.4 262.1,382.6 262.7,379.4 263.3,381.6 264.0,377.1 264.6,379.9 265.2,375.0 265.8,382.4 266.4,380.1 267.1,381.3 267.7,382.5 268.3,382.4 268.9,382.9 269.5,382.2 270.2,381.2 270.8,383.4 271.4,382.0 272.0,380.4 272.6,380.8 273.3,382.0 273.9,381.8 274.5,382.4 275.1,382.1 275.7,382.4 276.4,381.9 277.0,379.7 277.6,382.9 278.2,384.1 278.8,382.9 279.5,381.8 280.1,382.9 280.7,380.3 281.3,378.5 281.9,382.2 282.6,380.3 283.2,383.4 283.8,379.9 284.4,377.0 285.0,379.9 285.7,374.0 286.3,381.1 286.9,379.2 287.5,380.4 288.1,382.8 288.8,382.7 289.4,382.1 290.0,384.5 290.6,383.0 291.2,381.6 291.9,382.8 292.5,384.8 293.1,383.5 293.7,383.6 294.3,379.6 295.0,381.4 295.6,383.1 296.2,378.0 296.8,383.7 297.4,382.9 298.1,383.5 298.7,381.4 299.3,386.7 299.9,384.2 300.5,381.5 301.2,382.1 301.8,386.9 302.4,381.4 303.0,383.8 303.6,384.1 304.3,382.3 304.9,380.1 305.5,382.7 306.1,383.1 306.7,392.0 307.4,384.1 308.0,382.7 308.6,384.4 309.2,383.8 309.8,383.3 310.5,383.0 311.1,382.5 311.7,384.4 312.3,381.1 312.9,382.0 313.6,383.2 314.2,380.5 314.8,382.5 315.4,379.5 316.0,382.1 316.7,384.5 317.3,384.5 317.9,386.0 318.5,383.0 319.1,380.8 319.8,386.9 320.4,384.4 321.0,385.5 321.6,381.8 322.2,383.1 322.9,379.9 323.5,384.9 324.1,385.1 324.7,379.7 325.3,383.2 326.0,384.4 326.6,379.8 327.2,379.7 327.8,381.0 328.4,381.8 329.1,380.3 329.7,383.0 330.3,383.3 330.9,384.0 331.5,384.1 332.2,385.5 332.8,393.5 333.4,380.1 334.0,375.6 334.6,380.4 335.3,380.4 335.9,382.2 336.5,382.3 337.1,383.2 337.7,379.2 338.4,379.8 339.0,382.1 339.6,381.8 340.2,381.5 340.8,382.0 341.5,380.6 342.1,383.4 342.7,382.7 343.3,381.9 343.9,380.8 344.6,381.7 345.2,376.9 345.8,380.2 346.4,382.2 347.0,379.3 347.7,382.5 348.3,382.5 348.9,379.6 349.5,381.8 350.1,378.0 350.8,383.2 351.4,383.5 352.0,382.3 352.6,380.8 353.2,382.2 353.9,382.3 354.5,383.9 355.1,383.1 355.7,381.2 356.3,380.0 357.0,381.9 357.6,381.2 358.2,380.5 358.8,382.4 359.4,381.7 360.1,382.8 360.7,383.6 361.3,381.8 361.9,387.0 362.5,381.9 363.2,384.6 363.8,382.7 364.4,384.6 365.0,377.9 365.6,381.0 366.3,386.0 366.9,383.4 367.5,386.7 368.1,382.8 368.7,384.5 369.4,383.5 370.0,383.8 370.6,382.9 371.2,381.5 371.8,382.7 372.5,379.6 373.1,383.9 373.7,379.6 374.3,381.9 374.9,385.4 375.6,380.9 376.2,381.3 376.8,383.4 377.4,381.2 378.0,379.5 378.7,381.5 379.3,382.1 379.9,382.2 380.5,379.4 381.1,384.1 381.8,383.9 382.4,380.8 383.0,381.2 383.6,379.9 384.2,383.3 384.9,379.3 385.5,381.9 386.1,379.7 386.7,379.3 387.3,376.0 388.0,383.2 388.6,380.6 389.2,379.4 389.8,382.2 390.4,380.6 391.1,381.3 391.7,383.7 392.3,383.0 392.9,379.9 393.5,385.3 394.2,381.0 394.8,382.5 395.4,379.8 396.0,381.0 396.6,377.8 397.3,384.6 397.9,383.9 398.5,379.0 399.1,378.5 399.7,378.3 400.4,383.7 401.0,380.6 401.6,381.4 402.2,381.0 402.8,381.4 403.5,379.6 404.1,381.7 404.7,388.0 405.3,381.6 405.9,382.3 406.6,382.7 407.2,381.3 407.8,380.1 408.4,382.1 409.0,380.9 409.7,384.8 410.3,383.2 410.9,381.5 411.5,380.8 412.1,388.5 412.8,379.9 413.4,381.0 414.0,382.2 414.6,382.6 415.2,382.7 415.9,385.5 416.5,380.2 417.1,381.5 417.7,386.7 418.3,377.9 419.0,380.4 419.6,381.7 420.2,381.6 420.8,382.1 421.4,380.8 422.1,381.9 422.7,381.3 423.3,382.7 423.9,377.6 424.5,379.5 425.2,381.2 425.8,379.2 426.4,379.2 427.0,382.4 427.6,379.9 428.3,386.0 428.9,382.6 429.5,381.8 430.1,382.2 430.7,381.1 431.4,378.7 432.0,381.3 432.6,382.3 433.2,380.5 433.8,381.4 434.5,383.0"/><rect x="179.5" y="364.5" width="15" height="48" fill="none" stroke="#fff" stroke-width="1"/></svg>
<div class="a" style="left:2px;top:423px;width:459px;height:17px;border:1px solid;border-color:#808080 #fff #fff #808080"></div>
<svg class="a" style="left:447px;top:427px" width="13" height="13"><path d="M12 1 L1 12 M12 5 L5 12 M12 9 L9 12" stroke="#808080" stroke-width="1.3"/><path d="M12 0 L0 12 M12 4 L4 12 M12 8 L8 12" stroke="#fff" stroke-width="1"/></svg>
<div class="a" style="left:466px;top:0;width:171px;height:442px;background:#c0c0c0"></div>
<div class="a" style="left:465px;top:0;width:172px;height:2px;background:#f2f2f2"></div>
<div class="a" style="left:466px;top:0;width:1px;height:442px;background:#fff"></div>
<div class="a" style="left:467px;top:1px;width:1px;height:441px;background:#dcdcdc"></div>
<div class="a" style="left:468px;top:2px;width:169px;height:18px;background:linear-gradient(90deg,#808080 0%,#bcbcbc 100%)"></div><div class="a" style="left:468px;top:2px;width:169px;height:1px;background:rgba(255,255,255,0.35)"></div><div class="a" style="left:468px;top:19px;width:169px;height:1px;background:rgba(192,192,192,0.5)"></div>
<svg class="a" style="left:469px;top:3.0999999999999996px" width="18" height="16" viewBox="-1 -2 18 16"><rect x="-0.3" y="-1.1" width="16.1" height="13.6" fill="#000"/><rect x="0" y="0" width="14.8" height="11.4" fill="#fff"/><rect x="1.6" y="1.2" width="11.6" height="9" fill="#000"/><line x1="4.6" y1="1.4" x2="4.6" y2="10" stroke="#148014" stroke-width="0.8"/><line x1="7.5" y1="1.4" x2="7.5" y2="10" stroke="#148014" stroke-width="0.8"/><line x1="10.6" y1="1.4" x2="10.6" y2="10" stroke="#148014" stroke-width="0.8"/><line x1="1.8" y1="2.5" x2="13" y2="2.5" stroke="#148014" stroke-width="0.6"/><line x1="1.8" y1="6.7" x2="13" y2="6.7" stroke="#148014" stroke-width="0.9"/><line x1="1.8" y1="9.1" x2="13" y2="9.1" stroke="#148014" stroke-width="0.6"/><circle cx="4.6" cy="5.2" r="0.75" fill="#e8ffe8"/><circle cx="7.5" cy="5.2" r="0.75" fill="#e8ffe8"/><circle cx="10.6" cy="5.2" r="0.75" fill="#e8ffe8"/><path d="M3.4 5.9 L4.6 5.2 L6 6 L7.5 5.3 L9 6 L10.6 5.2 L11.8 5.9" fill="none" stroke="#70c870" stroke-width="0.6"/></svg>
<div class="t " style="left:489.2px;top:5.00px;font-size:12.6px;color:#c8c8c8;transform-origin:0 0;transform:scaleX(0.92);font-weight:bold;">Control</div>
<div class="btn" style="left:619px;top:4px;width:16px;height:14px"></div><svg class="a" style="left:619px;top:4px" width="16" height="14"><path d="M4.4 3.2 L11.6 9.6 M11.6 3.2 L4.4 9.6" stroke="#000" stroke-width="1.9" fill="none"/></svg>
<div class="t dis" style="left:474.5px;top:23.78px;font-size:11.5px;color:#808080;transform-origin:0 0;transform:scaleX(0.9);"><u>F</u>ile</div>
<div class="t dis" style="left:502.5px;top:23.78px;font-size:11.5px;color:#808080;transform-origin:0 0;transform:scaleX(0.9);"><u>H</u>elp</div>
<div class="grp" style="left:469px;top:47px;width:79px;height:216px"></div><div class="a" style="left:476px;top:46px;width:50px;height:4px;background:#c0c0c0"></div><div class="t " style="left:478px;top:40.70px;font-size:12px;color:#000;transform-origin:0 0;transform:scaleX(0.88);">Horizontal</div>
<div class="t " style="left:492.8px;top:56.50px;font-size:12px;color:#000;transform-origin:0 0;transform:scaleX(0.88);">MODE</div>
<div class="combo" style="left:476px;top:73px;width:64px;height:19px"></div><div class="t " style="left:480.1px;top:76.50px;font-size:12px;color:#000;transform-origin:0 0;transform:scaleX(0.88);">AUTO</div><div class="btn" style="left:522.5px;top:75px;width:15.5px;height:15px"></div><svg class="a" style="left:526.1px;top:79.9px" width="10" height="7"><polygon points="0.1,0.5 8.1,0.5 4.1,4.7" fill="#000"/></svg>
<div class="t " style="left:484.4px;top:96.52px;font-size:15px;color:#000;transform-origin:0 0;transform:scaleX(0.9);">Source</div>
<div class="combo" style="left:476px;top:113px;width:64px;height:19px"></div><div class="t " style="left:480px;top:116.30px;font-size:12px;color:#000;transform-origin:0 0;transform:scaleX(0.88);">CH1</div><div class="btn" style="left:522.5px;top:115px;width:15.5px;height:15px"></div><svg class="a" style="left:526.1px;top:119.9px" width="10" height="7"><polygon points="0.1,0.5 8.1,0.5 4.1,4.7" fill="#000"/></svg>
<div class="t " style="left:492.8px;top:136.10px;font-size:12px;color:#000;transform-origin:0 0;transform:scaleX(0.88);">Slope</div>
<div class="combo" style="left:476px;top:153px;width:64px;height:19px"></div><div class="t " style="left:480.4px;top:156.50px;font-size:12px;color:#000;transform-origin:0 0;transform:scaleX(0.88);">Positive</div><div class="btn" style="left:522.5px;top:155px;width:15.5px;height:15px"></div><svg class="a" style="left:526.1px;top:159.9px" width="10" height="7"><polygon points="0.1,0.5 8.1,0.5 4.1,4.7" fill="#000"/></svg>
<div class="t " style="left:492.8px;top:176.70px;font-size:12px;color:#000;transform-origin:0 0;transform:scaleX(0.88);">Couple</div>
<div class="combo" style="left:476px;top:193px;width:64px;height:19px"></div><div class="t " style="left:480.1px;top:196.60px;font-size:12px;color:#000;transform-origin:0 0;transform:scaleX(0.88);">AC</div><div class="btn" style="left:522.5px;top:195px;width:15.5px;height:15px"></div><svg class="a" style="left:526.1px;top:199.9px" width="10" height="7"><polygon points="0.1,0.5 8.1,0.5 4.1,4.7" fill="#000"/></svg>
<div class="btn" style="left:476px;top:216px;width:65px;height:17px"></div>
<div class="t " style="left:495px;top:217.30px;font-size:12px;color:#000;transform-origin:0 0;transform:scaleX(0.86);letter-spacing:0.3px;">STOP</div>
<div class="btn" style="left:476px;top:239.5px;width:65px;height:17.5px"></div>
<div class="t " style="left:481.4px;top:241.40px;font-size:12px;color:#000;transform-origin:0 0;transform:scaleX(0.88);letter-spacing:0.2px;">AUTO SET</div>
<div class="grp" style="left:556px;top:47px;width:80px;height:104px"></div><div class="a" style="left:564.2px;top:46px;width:38px;height:4px;background:#c0c0c0"></div><div class="t " style="left:566.2px;top:40.70px;font-size:12px;color:#000;transform-origin:0 0;transform:scaleX(0.875);">TIME B</div>
<div class="combo" style="left:564px;top:57px;width:64px;height:19px"></div><div class="t " style="left:567.6px;top:60.70px;font-size:12px;color:#808080;transform-origin:0 0;transform:scaleX(0.88);">0.2uS</div><div class="btn" style="left:610.5px;top:59px;width:15.5px;height:15px"></div><svg class="a" style="left:614.1px;top:63.9px" width="10" height="7"><polygon points="1.3,1.5 8.9,1.5 5.1,5.6" fill="#fff"/><polygon points="0.3,0.5 7.9,0.5 4.1,4.6" fill="#808080"/></svg>
<div class="grp" style="left:556px;top:159px;width:80px;height:104px"></div><div class="a" style="left:564.2px;top:158px;width:38px;height:4px;background:#c0c0c0"></div><div class="t " style="left:566.2px;top:152.70px;font-size:12px;color:#000;transform-origin:0 0;transform:scaleX(0.88);">TIME A</div>
<div class="combo" style="left:564px;top:169px;width:64px;height:19px"></div><div class="t " style="left:568px;top:172.90px;font-size:12px;color:#808080;transform-origin:0 0;transform:scaleX(0.88);">5uS</div><div class="btn" style="left:610.5px;top:171px;width:15.5px;height:15px"></div><svg class="a" style="left:614.1px;top:175.9px" width="10" height="7"><polygon points="1.3,1.5 8.9,1.5 5.1,5.6" fill="#fff"/><polygon points="0.3,0.5 7.9,0.5 4.1,4.6" fill="#808080"/></svg>
<svg class="a" style="left:556px;top:72.5px" width="80" height="80" viewBox="-40 -40 80 80"><path d="M-20.72 20.72 A29.3 29.3 0 1 1 20.72 20.72 L0 0 Z" fill="#cccccc"/><path d="M-18.60 18.60 A26.3 26.3 0 1 1 18.60 18.60 L0 0 Z" fill="#dcdcdc"/><path d="M-20.72 20.72 A29.3 29.3 0 1 1 20.72 20.72" fill="none" stroke="#000" stroke-width="1.05"/><path d="M-18.60 18.60 A26.3 26.3 0 1 1 18.60 18.60" fill="none" stroke="#000" stroke-width="1.05"/><path d="M17.26 -19.17 A25.8 25.8 0 0 1 -18.24 18.24 Z" fill="#808080"/><circle cx="0" cy="-0.5" r="20.2" fill="#0000ff"/><line x1="-17.3" y1="17.3" x2="-25.9" y2="25.9" stroke="#000" stroke-width="1"/><line x1="17.3" y1="17.3" x2="25.9" y2="25.9" stroke="#000" stroke-width="1"/><line x1="10.0" y1="0.5" x2="19.8" y2="1.0" stroke="#fff" stroke-width="2.3"/></svg>
<svg class="a" style="left:556.3px;top:184.7px" width="80" height="80" viewBox="-40 -40 80 80"><path d="M-20.72 20.72 A29.3 29.3 0 1 1 20.72 20.72 L0 0 Z" fill="#cccccc"/><path d="M-18.60 18.60 A26.3 26.3 0 1 1 18.60 18.60 L0 0 Z" fill="#dcdcdc"/><path d="M-20.72 20.72 A29.3 29.3 0 1 1 20.72 20.72" fill="none" stroke="#000" stroke-width="1.05"/><path d="M-18.60 18.60 A26.3 26.3 0 1 1 18.60 18.60" fill="none" stroke="#000" stroke-width="1.05"/><path d="M17.26 -19.17 A25.8 25.8 0 0 1 -18.24 18.24 Z" fill="#808080"/><circle cx="0" cy="-0.5" r="20.2" fill="#0000ff"/><line x1="-17.3" y1="17.3" x2="-25.9" y2="25.9" stroke="#000" stroke-width="1"/><line x1="17.3" y1="17.3" x2="25.9" y2="25.9" stroke="#000" stroke-width="1"/><line x1="9.5" y1="-3.3" x2="18.7" y2="-6.4" stroke="#fff" stroke-width="2.3"/></svg>
<svg class="a" style="left:468.4px;top:360.2px" width="80" height="80" viewBox="-40 -40 80 80"><path d="M-20.72 20.72 A29.3 29.3 0 1 1 20.72 20.72 L0 0 Z" fill="#cccccc"/><path d="M-18.60 18.60 A26.3 26.3 0 1 1 18.60 18.60 L0 0 Z" fill="#dcdcdc"/><path d="M-20.72 20.72 A29.3 29.3 0 1 1 20.72 20.72" fill="none" stroke="#000" stroke-width="1.05"/><path d="M-18.60 18.60 A26.3 26.3 0 1 1 18.60 18.60" fill="none" stroke="#000" stroke-width="1.05"/><path d="M17.26 -19.17 A25.8 25.8 0 0 1 -18.24 18.24 Z" fill="#808080"/><circle cx="0" cy="-0.5" r="20.2" fill="#0000ff"/><line x1="-17.3" y1="17.3" x2="-25.9" y2="25.9" stroke="#000" stroke-width="1"/><line x1="17.3" y1="17.3" x2="25.9" y2="25.9" stroke="#000" stroke-width="1"/><line x1="7.1" y1="7.1" x2="14.0" y2="14.0" stroke="#fff" stroke-width="2.3"/></svg>
<svg class="a" style="left:556.3px;top:360.2px" width="80" height="80" viewBox="-40 -40 80 80"><path d="M-20.72 20.72 A29.3 29.3 0 1 1 20.72 20.72 L0 0 Z" fill="#cccccc"/><path d="M-18.60 18.60 A26.3 26.3 0 1 1 18.60 18.60 L0 0 Z" fill="#dcdcdc"/><path d="M-20.72 20.72 A29.3 29.3 0 1 1 20.72 20.72" fill="none" stroke="#000" stroke-width="1.05"/><path d="M-18.60 18.60 A26.3 26.3 0 1 1 18.60 18.60" fill="none" stroke="#000" stroke-width="1.05"/><path d="M17.26 -19.17 A25.8 25.8 0 0 1 -18.24 18.24 Z" fill="#808080"/><circle cx="0" cy="-0.5" r="20.2" fill="#0000ff"/><line x1="-17.3" y1="17.3" x2="-25.9" y2="25.9" stroke="#000" stroke-width="1"/><line x1="17.3" y1="17.3" x2="25.9" y2="25.9" stroke="#000" stroke-width="1"/><line x1="-7.3" y1="6.8" x2="-14.5" y2="13.5" stroke="#fff" stroke-width="2.3"/></svg>
<div class="grp" style="left:469px;top:271px;width:170px;height:172px"></div><div class="a" style="left:475.2px;top:270px;width:39px;height:4px;background:#c0c0c0"></div><div class="t " style="left:477.2px;top:264.70px;font-size:12px;color:#000;transform-origin:0 0;transform:scaleX(0.9);">Vertical</div>
<div class="a" style="left:468px;top:296px;width:1px;height:143px;background:#808080"></div><div class="a" style="left:469px;top:296px;width:1px;height:143px;background:#fff"></div>
<div class="a" style="left:469px;top:296px;width:7px;height:1px;background:#fff"></div>
<div class="a" style="left:547px;top:329px;width:1px;height:110px;background:#808080"></div><div class="a" style="left:548px;top:329px;width:1px;height:110px;background:#fff"></div>
<div class="a" style="left:556px;top:329px;width:1px;height:110px;background:#808080"></div><div class="a" style="left:557px;top:329px;width:1px;height:110px;background:#fff"></div>
<div class="a" style="left:629px;top:295px;width:8px;height:1px;background:#fff"></div>
<div class="a" style="left:468px;top:438px;width:80px;height:1px;background:#808080"></div><div class="a" style="left:468px;top:439px;width:81px;height:1px;background:#fff"></div>
<div class="a" style="left:556px;top:438px;width:81px;height:1px;background:#808080"></div><div class="a" style="left:556px;top:439px;width:81px;height:1px;background:#fff"></div>
<div class="chk" style="left:476.5px;top:282.3px"></div><svg class="a" style="left:476.5px;top:282.3px" width="12" height="12"><path d="M2.8 5.3 L5 7.6 L9.3 3.2" stroke="#000" stroke-width="2.1" fill="none"/></svg>
<div class="t " style="left:495px;top:281.80px;font-size:12px;color:#000;transform-origin:0 0;transform:scaleX(0.86);">CH.A</div>
<div class="chk" style="left:532.6px;top:282.3px"></div>
<div class="t " style="left:550.2px;top:281.80px;font-size:12px;color:#000;transform-origin:0 0;transform:scaleX(0.89);">ADD</div>
<div class="chk" style="left:580.8px;top:282.3px"></div>
<div class="t " style="left:598.6px;top:281.80px;font-size:12px;color:#000;transform-origin:0 0;transform:scaleX(0.85);">CH.B</div>
<div class="chk" style="left:532.6px;top:298.2px"></div>
<div class="t " style="left:549.6px;top:297.80px;font-size:12px;color:#000;transform-origin:0 0;transform:scaleX(0.88);">SUB</div>
<div class="chk" style="left:532.6px;top:314.4px"></div>
<div class="t " style="left:549.7px;top:314.10px;font-size:12px;color:#000;transform-origin:0 0;transform:scaleX(0.84);">X-Y</div>
<svg class="a" style="left:493.6px;top:296.5px" width="11" height="11" viewBox="-5.5 -5.5 11 11"><circle r="5" fill="#fff"/><path d="M-3.6 3.6 A5.1 5.1 0 0 1 3.6 -3.6" fill="none" stroke="#606060" stroke-width="1.2"/><path d="M-3.2 3.2 A4.2 4.2 0 0 1 3.2 -3.2" fill="none" stroke="#000" stroke-width="0.9"/><path d="M3.6 -3.6 A5.1 5.1 0 0 1 -3.6 3.6" fill="none" stroke="#fff" stroke-width="1.2"/><path d="M3.1 -3.1 A4.2 4.2 0 0 1 -3.1 3.1" fill="none" stroke="#d8d8d8" stroke-width="0.9"/></svg>
<div class="t " style="left:509.6px;top:297.40px;font-size:12px;color:#000;transform-origin:0 0;transform:scaleX(0.9);">DC</div>
<svg class="a" style="left:581.5px;top:298.2px" width="11" height="11" viewBox="-5.5 -5.5 11 11"><circle r="5" fill="#fff"/><path d="M-3.6 3.6 A5.1 5.1 0 0 1 3.6 -3.6" fill="none" stroke="#606060" stroke-width="1.2"/><path d="M-3.2 3.2 A4.2 4.2 0 0 1 3.2 -3.2" fill="none" stroke="#000" stroke-width="0.9"/><path d="M3.6 -3.6 A5.1 5.1 0 0 1 -3.6 3.6" fill="none" stroke="#fff" stroke-width="1.2"/><path d="M3.1 -3.1 A4.2 4.2 0 0 1 -3.1 3.1" fill="none" stroke="#d8d8d8" stroke-width="0.9"/></svg>
<div class="t " style="left:597.6px;top:298.00px;font-size:12px;color:#000;transform-origin:0 0;transform:scaleX(0.9);">DC</div>
<svg class="a" style="left:493.6px;top:312.7px" width="11" height="11" viewBox="-5.5 -5.5 11 11"><circle r="5" fill="#fff"/><path d="M-3.6 3.6 A5.1 5.1 0 0 1 3.6 -3.6" fill="none" stroke="#606060" stroke-width="1.2"/><path d="M-3.2 3.2 A4.2 4.2 0 0 1 3.2 -3.2" fill="none" stroke="#000" stroke-width="0.9"/><path d="M3.6 -3.6 A5.1 5.1 0 0 1 -3.6 3.6" fill="none" stroke="#fff" stroke-width="1.2"/><path d="M3.1 -3.1 A4.2 4.2 0 0 1 -3.1 3.1" fill="none" stroke="#d8d8d8" stroke-width="0.9"/><circle r="1.9" fill="#000"/></svg>
<div class="t " style="left:510.4px;top:313.20px;font-size:12px;color:#000;transform-origin:0 0;transform:scaleX(0.88);">AC</div>
<svg class="a" style="left:581.5px;top:314.5px" width="11" height="11" viewBox="-5.5 -5.5 11 11"><circle r="5" fill="#fff"/><path d="M-3.6 3.6 A5.1 5.1 0 0 1 3.6 -3.6" fill="none" stroke="#606060" stroke-width="1.2"/><path d="M-3.2 3.2 A4.2 4.2 0 0 1 3.2 -3.2" fill="none" stroke="#000" stroke-width="0.9"/><path d="M3.6 -3.6 A5.1 5.1 0 0 1 -3.6 3.6" fill="none" stroke="#fff" stroke-width="1.2"/><path d="M3.1 -3.1 A4.2 4.2 0 0 1 -3.1 3.1" fill="none" stroke="#d8d8d8" stroke-width="0.9"/><circle r="1.9" fill="#000"/></svg>
<div class="t " style="left:598.4px;top:314.30px;font-size:12px;color:#000;transform-origin:0 0;transform:scaleX(0.88);">AC</div>
<svg class="a" style="left:493.6px;top:328.6px" width="11" height="11" viewBox="-5.5 -5.5 11 11"><circle r="5" fill="#fff"/><path d="M-3.6 3.6 A5.1 5.1 0 0 1 3.6 -3.6" fill="none" stroke="#606060" stroke-width="1.2"/><path d="M-3.2 3.2 A4.2 4.2 0 0 1 3.2 -3.2" fill="none" stroke="#000" stroke-width="0.9"/><path d="M3.6 -3.6 A5.1 5.1 0 0 1 -3.6 3.6" fill="none" stroke="#fff" stroke-width="1.2"/><path d="M3.1 -3.1 A4.2 4.2 0 0 1 -3.1 3.1" fill="none" stroke="#d8d8d8" stroke-width="0.9"/></svg>
<div class="t " style="left:510.2px;top:328.80px;font-size:12px;color:#000;transform-origin:0 0;transform:scaleX(0.86);">GND</div>
<svg class="a" style="left:581.5px;top:330.5px" width="11" height="11" viewBox="-5.5 -5.5 11 11"><circle r="5" fill="#fff"/><path d="M-3.6 3.6 A5.1 5.1 0 0 1 3.6 -3.6" fill="none" stroke="#606060" stroke-width="1.2"/><path d="M-3.2 3.2 A4.2 4.2 0 0 1 3.2 -3.2" fill="none" stroke="#000" stroke-width="0.9"/><path d="M3.6 -3.6 A5.1 5.1 0 0 1 -3.6 3.6" fill="none" stroke="#fff" stroke-width="1.2"/><path d="M3.1 -3.1 A4.2 4.2 0 0 1 -3.1 3.1" fill="none" stroke="#d8d8d8" stroke-width="0.9"/></svg>
<div class="t " style="left:598.2px;top:330.00px;font-size:12px;color:#000;transform-origin:0 0;transform:scaleX(0.86);">GND</div>
<div class="combo" style="left:476px;top:344.5px;width:63.5px;height:19px"></div><div class="t " style="left:481px;top:348.50px;font-size:12px;color:#808080;transform-origin:0 0;transform:scaleX(0.88);">10mV</div><div class="btn" style="left:522.0px;top:346.5px;width:15.5px;height:15px"></div><svg class="a" style="left:525.6px;top:351.4px" width="10" height="7"><polygon points="1.3,1.5 8.9,1.5 5.1,5.6" fill="#fff"/><polygon points="0.3,0.5 7.9,0.5 4.1,4.6" fill="#808080"/></svg>
<div class="combo" style="left:565px;top:344.5px;width:62.5px;height:19px"></div><div class="t " style="left:568.6px;top:348.50px;font-size:12px;color:#808080;transform-origin:0 0;transform:scaleX(0.88);">5V</div><div class="btn" style="left:610.0px;top:346.5px;width:15.5px;height:15px"></div><svg class="a" style="left:613.6px;top:351.4px" width="10" height="7"><polygon points="1.3,1.5 8.9,1.5 5.1,5.6" fill="#fff"/><polygon points="0.3,0.5 7.9,0.5 4.1,4.6" fill="#808080"/></svg>
</body></html>
